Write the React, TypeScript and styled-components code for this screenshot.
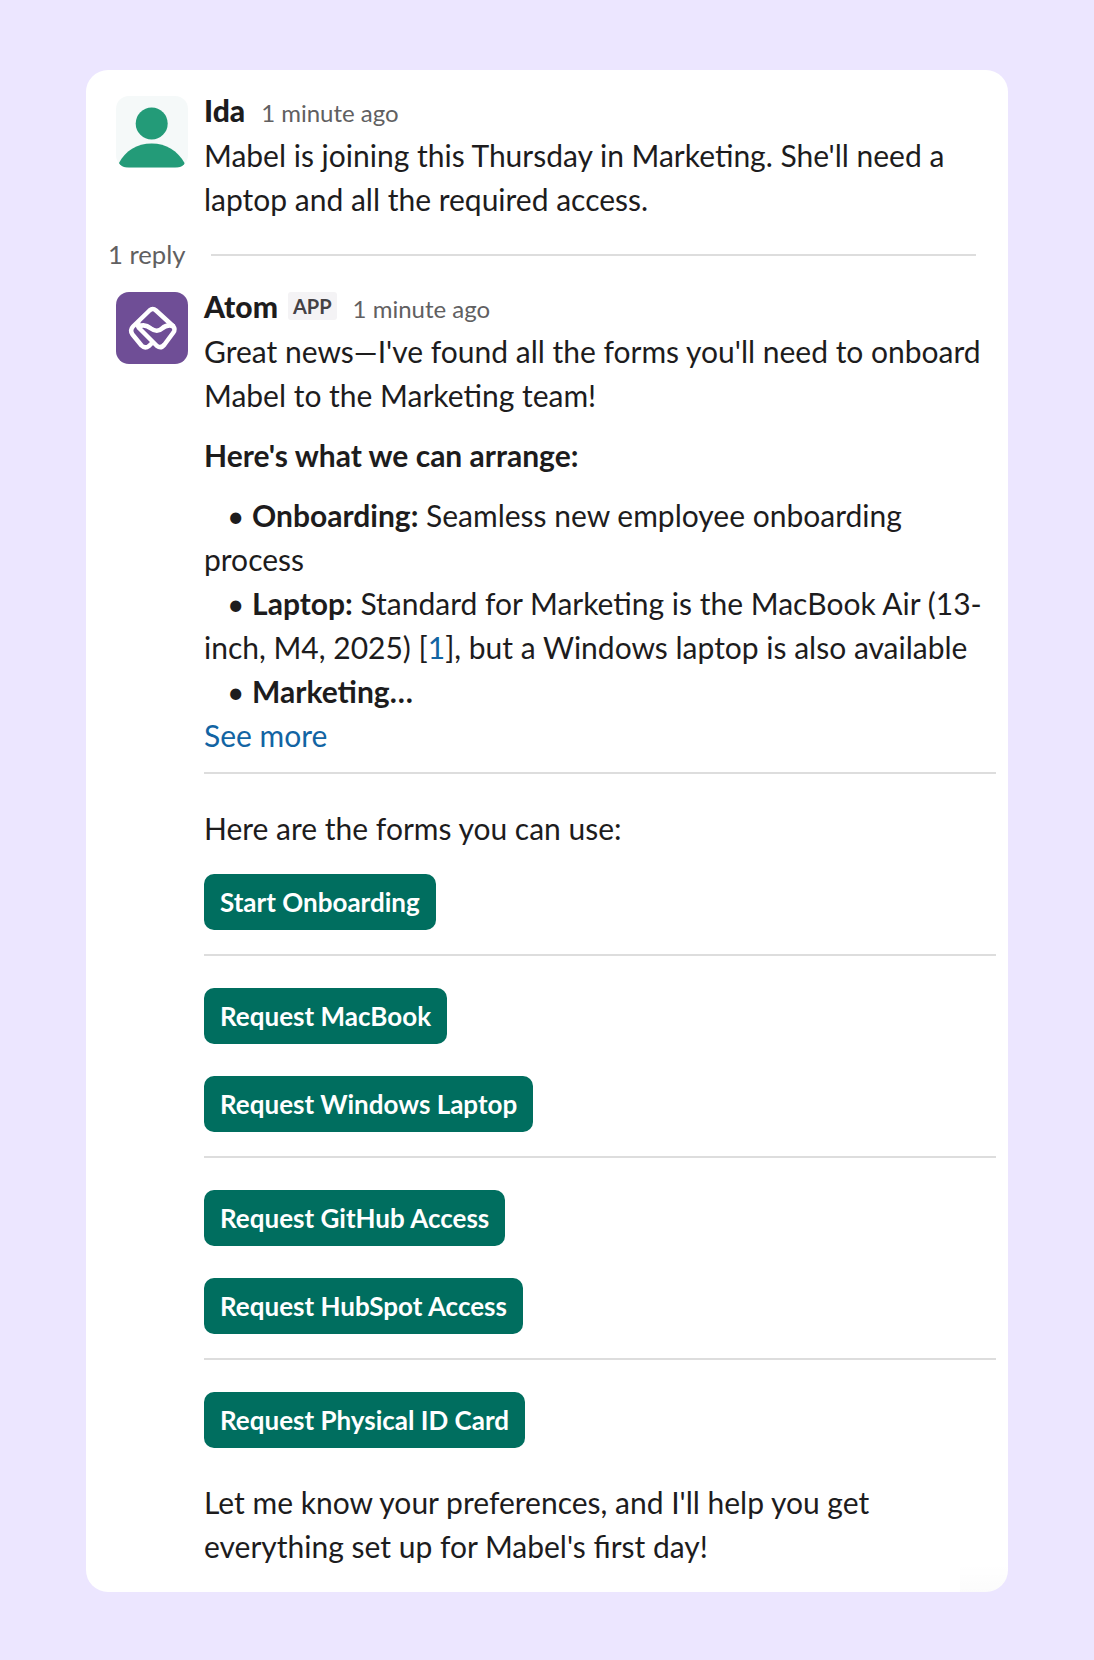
import React from "react"
import styled, { createGlobalStyle } from "styled-components"

const GlobalStyle = createGlobalStyle`
  html, body {
    margin: 0;
    padding: 0;
    background: #ece6ff;
  }
`

const Page = styled.div`
  width: 1094px;
  height: 1660px;
  box-sizing: border-box;
  padding: 70px 86px 68px;
  font-family: Lato, "Noto Sans", sans-serif;
  color: #1d1c1d;
`

const Card = styled.div`
  position: relative;
  background: #ffffff;
  border-radius: 22px;
  height: 1522px;
  box-sizing: border-box;
  padding: 26px 12px 0 30px;
  &::after {
    content: "";
    position: absolute;
    right: 0;
    bottom: 0;
    width: 48px;
    height: 28px;
    border-bottom-right-radius: 22px;
    background: linear-gradient(rgba(0, 0, 0, 0), rgba(0, 0, 0, 0.015));
  }
`

const Message = styled.div<{ $top?: number }>`
  display: flex;
  gap: 16px;
  margin-top: ${(p) => p.$top ?? 0}px;
`

const Avatar = styled.div<{ $bg: string }>`
  width: 72px;
  height: 72px;
  flex: none;
  border-radius: 13px;
  background: ${(p) => p.$bg};
  overflow: hidden;
  svg {
    display: block;
  }
`

const Content = styled.div`
  flex: 1;
  min-width: 0;
`

const Header = styled.div`
  display: flex;
  align-items: flex-start;
  height: 37px;
`

const Name = styled.span`
  font-size: 30px;
  line-height: 28px;
  font-weight: 900;
`

const AppTag = styled.span`
  background: #f4f3f5;
  color: #454245;
  font-size: 20px;
  font-weight: 700;
  height: 28px;
  line-height: 28px;
  padding: 0 5px;
  border-radius: 3px;
  margin-left: 10px;
`

const Time = styled.span`
  color: #616061;
  font-size: 24px;
  line-height: 28px;
  margin-left: 16px;
  margin-top: 3px;
`

const Text = styled.p<{ $gap?: number }>`
  margin: ${(p) => p.$gap ?? 0}px 0 0;
  font-size: 30px;
  line-height: 44px;
  padding-right: 12px;
`

const Bold = styled.b`
  font-weight: 700;
`

const Bullet = styled.span`
  display: block;
  text-indent: 23px;
`

const Cite = styled.a`
  color: #1264a3;
`

const Replies = styled.div`
  display: flex;
  align-items: center;
  gap: 25px;
  margin: 12px 20px 0 -8px;
  height: 44px;
  color: #616061;
  font-size: 25.7px;
`

const ReplyCount = styled.span`
  margin-top: -2px;
`

const ReplyLine = styled.div`
  flex: 1;
  height: 2px;
  background: #dddddd;
`

const Divider = styled.div<{ $top: number; $bottom: number }>`
  height: 2px;
  background: #dddddd;
  margin: ${(p) => p.$top}px 0 ${(p) => p.$bottom}px;
`

const ActionRow = styled.div<{ $top?: number }>`
  display: flex;
  flex-direction: column;
  align-items: flex-start;
  gap: 32px;
  margin-top: ${(p) => p.$top ?? 0}px;
`

const Action = styled.button`
  height: 56px;
  padding: 0 16px;
  border: 0;
  border-radius: 10px;
  background: #006e5f;
  color: #ffffff;
  font-family: inherit;
  font-size: 26px;
  font-weight: 700;
`

const PersonIcon = () => (
  <svg width="72" height="72" viewBox="0 0 72 72">
    <circle cx="35.7" cy="27.5" r="16" fill="#239b78" />
    <path d="M3 67 C9 55 21 47.500 35.700 47.500 C50 47.500 62 55 68.500 67 Q69 71 65 71.500 L7 71.500 Q3 71 3 67 Z" fill="#239b78" />
  </svg>
)

const AtomIcon = () => (
  <svg width="72" height="72" viewBox="0 0 72 72" fill="none" stroke="#ffffff" strokeWidth="4.500" strokeLinejoin="round" strokeLinecap="round">
    <path d="M37 50 L33 54 Q29 57 25.500 53.500 L16.500 42.500 Q13.500 38 17 34.500 L33.500 18.500 Q36.800 15.500 40 18.500 L57 34 Q60 37.500 57 41 L48.500 52.500 Q45 57 41 54 L23 36 Q21 33.500 22.500 30" />
    <path d="M23 34.500 Q29 31.500 35 36.500 Q41 41 46 36.500 Q51 32 57 34" />
  </svg>
)

export default function App() {
  return (
    <Page>
      <GlobalStyle />
      <Card>
        <Message>
          <Avatar $bg="#f5f9f9">
            <PersonIcon />
          </Avatar>
          <Content>
            <Header>
              <Name>Ida</Name>
              <Time>1 minute ago</Time>
            </Header>
            <Text>
              Mabel is joining this Thursday in Marketing. She'll need a laptop and all the required access.
            </Text>
          </Content>
        </Message>
        <Replies>
          <ReplyCount>1 reply</ReplyCount>
          <ReplyLine />
        </Replies>
        <Message $top={15}>
          <Avatar $bg="#6f4e96">
            <AtomIcon />
          </Avatar>
          <Content>
            <Header>
              <Name>Atom</Name>
              <AppTag>APP</AppTag>
              <Time>1 minute ago</Time>
            </Header>
            <Text>Great news—I've found all the forms you'll need to onboard Mabel to the Marketing team!</Text>
            <Text $gap={16}>
              <Bold>Here's what we can arrange:</Bold>
            </Text>
            <Text $gap={16}>
              <Bullet>
                • <Bold>Onboarding:</Bold> Seamless new employee onboarding process
              </Bullet>
              <Bullet>
                • <Bold>Laptop:</Bold> Standard for Marketing is the MacBook Air (13-inch, M4, 2025) [<Cite>1</Cite>], but a Windows laptop is also available
              </Bullet>
              <Bullet>
                • <Bold>Marketing…</Bold>
              </Bullet>
              <Cite>See more</Cite>
            </Text>
            <Divider $top={15} $bottom={32} />
            <Text>Here are the forms you can use:</Text>
            <ActionRow $top={24}>
              <Action>Start Onboarding</Action>
            </ActionRow>
            <Divider $top={24} $bottom={32} />
            <ActionRow>
              <Action>Request MacBook</Action>
              <Action>Request Windows Laptop</Action>
            </ActionRow>
            <Divider $top={24} $bottom={32} />
            <ActionRow>
              <Action>Request GitHub Access</Action>
              <Action>Request HubSpot Access</Action>
            </ActionRow>
            <Divider $top={24} $bottom={32} />
            <ActionRow>
              <Action>Request Physical ID Card</Action>
            </ActionRow>
            <Text $gap={32}>Let me know your preferences, and I'll help you get everything set up for Mabel's first day!</Text>
          </Content>
        </Message>
      </Card>
    </Page>
  )
}
